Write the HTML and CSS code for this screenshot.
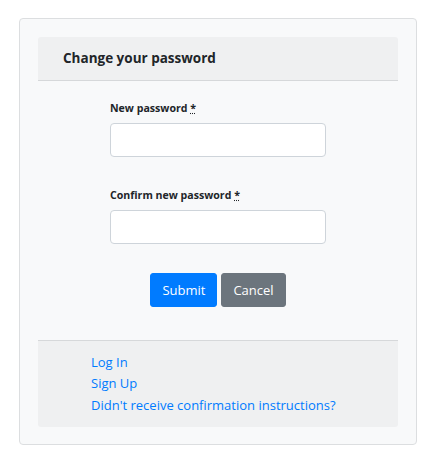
FILE: index.html
```html
<!DOCTYPE html>
<html>
<head>
<meta charset="utf-8">
<link rel="stylesheet" href="styles.css">
</head>
<body>
<div class="outer">
  <div class="card">
    <div class="card-header">Change your password</div>
    <div class="card-body">
      <form class="form">
        <div class="group">
          <label class="label">New password <abbr title="required">*</abbr></label>
          <input class="input" type="password">
        </div>
        <div class="group">
          <label class="label">Confirm new password <abbr title="required">*</abbr></label>
          <input class="input" type="password">
        </div>
        <div class="actions">
          <button type="button" class="btn btn-primary">Submit</button>
          <button type="button" class="btn btn-secondary">Cancel</button>
        </div>
      </form>
    </div>
    <div class="card-footer">
      <a class="link" href="#">Log In</a>
      <a class="link" href="#">Sign Up</a>
      <a class="link" href="#">Didn't receive confirmation instructions?</a>
    </div>
  </div>
</div>
</body>
</html>
```
FILE: styles.css
```css
html, body {
  margin: 0;
  padding: 0;
  background: #ffffff;
}
body {
  font-family: "Open Sans", "Noto Sans", sans-serif;
  font-size: 13px;
  line-height: 1.5;
  color: #212529;
}
.outer {
  margin: 18px 19px 0 19px;
  width: 360px;
  padding: 18px 18px 17px 18px;
  background: #f8f9fa;
  border: 1px solid #dcdee0;
  border-radius: 4px;
}
.card {
  background: #f8f9fa;
  border-radius: 3px;
}
.card-header {
  background: #eff0f1;
  border-bottom: 1px solid #d6d8da;
  border-radius: 3px 3px 0 0;
  padding: 11px 25px 11px 25px;
  font-size: 13.5px;
  font-weight: 700;
  line-height: 21px;
}
.card-body {
  padding: 18px 0 33px 0;
}
.form {
  width: 216px;
  margin: 0 auto;
}
.group {
  margin-bottom: 29px;
}
.label {
  display: block;
  font-size: 10.6px;
  font-weight: 700;
  line-height: 18px;
  margin-bottom: 6px;
}
.label abbr {
  text-decoration: underline dotted;
  cursor: help;
}
.input {
  display: block;
  box-sizing: border-box;
  width: 216px;
  height: 34px;
  margin: 0;
  padding: 5px 10px;
  background: #ffffff;
  border: 1px solid #ced4da;
  border-radius: 4px;
  font: inherit;
}
.actions {
  display: flex;
  justify-content: center;
  gap: 4px;
}
.btn {
  height: 34px;
  padding: 0 11px;
  border: 1px solid transparent;
  border-radius: 3px;
  font-family: inherit;
  font-size: 13px;
  color: #ffffff;
  line-height: 20px;
}
.btn-primary {
  background: #007bff;
  border-color: #007bff;
}
.btn-secondary {
  background: #6c757d;
  border-color: #6c757d;
}
.card-footer {
  background: #eff0f1;
  border-top: 1px solid #d6d8da;
  border-radius: 0 0 3px 3px;
  padding: 10.5px 0 10.5px 53px;
}
.link {
  display: block;
  color: #007bff;
  text-decoration: none;
  line-height: 21.5px;
}
```
